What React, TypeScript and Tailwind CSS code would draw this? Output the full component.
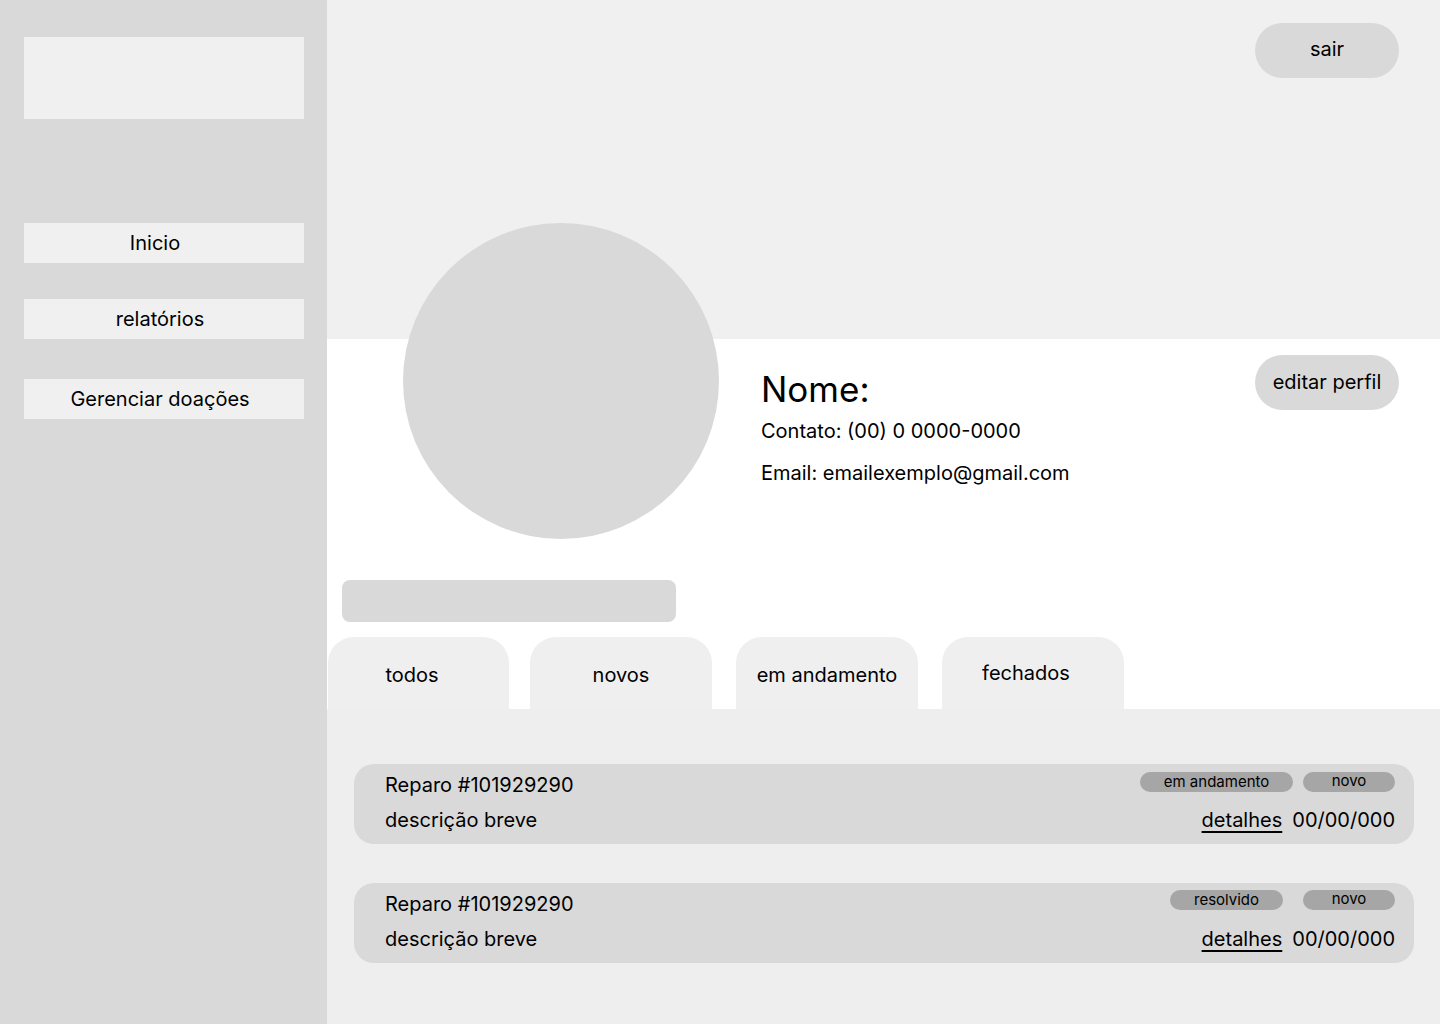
const navItems = [
  { label: 'Inicio', pad: 'pr-[18px]' },
  { label: 'relatórios', pad: 'pr-[8px]' },
  { label: 'Gerenciar doações', pad: 'pr-[8px]' },
]

const tabs = [
  { label: 'todos', cls: 'ml-[1px] w-[181px] pt-[26px] pr-[13px]' },
  { label: 'novos', cls: 'ml-[21px] w-[182px] pt-[26px]' },
  { label: 'em andamento', cls: 'ml-[24px] w-[182px] pt-[26px]' },
  { label: 'fechados', cls: 'ml-[24px] w-[182px] pt-[24px] pr-[14px]' },
]

const repairs = [
  { id: '101929290', status: 'em andamento', statusW: 'w-[153px]', gap: 'gap-[10px]', pt: 'pt-[8px]' },
  { id: '101929290', status: 'resolvido', statusW: 'w-[113px]', gap: 'gap-[20px]', pt: 'pt-[7px]' },
]

export default function App() {
  return (
    <div className="flex h-[1024px] w-[1440px] overflow-hidden font-['Inter','Noto_Sans',sans-serif] text-black">
      {/* Sidebar */}
      <aside className="flex w-[327px] shrink-0 flex-col bg-[#d9d9d9] px-6 pt-[37px]">
        <div className="h-[82px] w-[280px] bg-[#f0f0f0]" />
        <nav className="mt-[104px] flex flex-col">
          {navItems.map((item, i) => (
            <button
              key={item.label}
              className={cn(
                'flex h-10 w-[280px] items-center justify-center bg-[#f0f0f0] text-[20px] leading-6',
                item.pad,
                i === 1 ? 'mt-9' : i === 2 ? 'mt-10' : ''
              )}
            >
              {item.label}
            </button>
          ))}
        </nav>
      </aside>

      {/* Main */}
      <main className="flex flex-1 flex-col bg-white">
        <header className="flex h-[339px] shrink-0 items-start justify-end bg-[#f0f0f0] pr-[41px] pt-[23px]">
          <button className="h-[55px] w-[144px] rounded-full bg-[#d9d9d9] pb-[3px] text-[20px] leading-6">sair</button>
        </header>

        {/* Profile */}
        <section className="flex items-start pl-[76px] pr-[41px]">
          <div className="-mt-[116px] h-[316px] w-[316px] shrink-0 rounded-full bg-[#d9d9d9]" />
          <div className="ml-[42px] mt-[29px] flex flex-col">
            <h1 className="text-[35px] leading-[42px]">Nome:</h1>
            <p className="mt-[9px] text-[20px] leading-6">Contato: (00) 0 0000-0000</p>
            <p className="mt-[18px] text-[20px] leading-6">Email: emailexemplo@gmail.com</p>
          </div>
          <button className="ml-auto mt-4 h-[55px] w-[144px] rounded-full bg-[#d9d9d9] pb-[1px] text-[20px] leading-6">
            editar perfil
          </button>
        </section>

        <div className="ml-[15px] mt-[41px] h-[42px] w-[334px] rounded-lg bg-[#d9d9d9]" />

        {/* Tabs */}
        <div className="mt-[15px] flex h-[72px] items-stretch">
          {tabs.map((tab) => (
            <button
              key={tab.label}
              className={cn('flex justify-center rounded-t-[26px] bg-[#efefef] text-[20px] leading-6', tab.cls)}
            >
              {tab.label}
            </button>
          ))}
        </div>

        {/* Repairs */}
        <div className="flex flex-1 flex-col gap-[39px] bg-[#eeeeee] pl-[27px] pr-[26px] pt-[55px]">
          {repairs.map((r, i) => (
            <div key={i} className="flex h-20 justify-between rounded-[20px] bg-[#d9d9d9] pl-[31px] pr-[19px]">
              <div className="flex flex-col pt-[9px] text-[20px] leading-6">
                <span>Reparo #{r.id}</span>
                <span className="mt-[11px]">descrição breve</span>
              </div>
              <div className={cn('flex flex-col items-end', r.pt)}>
                <div className={cn('flex', r.gap)}>
                  <span className={cn('flex h-5 items-center justify-center rounded-full bg-[#a6a6a6] pb-[1px] text-[15px] leading-5', r.statusW)}>
                    {r.status}
                  </span>
                  <span className="flex h-5 w-[92px] items-center justify-center rounded-full bg-[#a6a6a6] pb-[2px] text-[15px] leading-5">
                    novo
                  </span>
                </div>
                <div className={cn('flex items-center gap-[10px] text-[20px] leading-6', i === 0 ? 'mt-4' : 'mt-[17px]')}>
                  <a className="underline underline-offset-4">detalhes</a>
                  <span>00/00/000</span>
                </div>
              </div>
            </div>
          ))}
        </div>
      </main>
    </div>
  )
}

function cn(...classes: string[]) {
  return classes.filter(Boolean).join(' ')
}
